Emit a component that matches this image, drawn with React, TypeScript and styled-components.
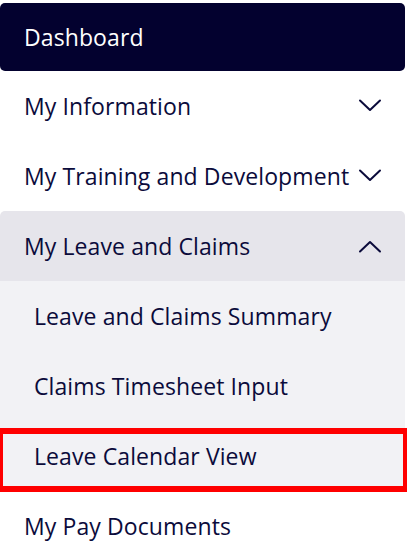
import React from 'react';
import styled, { createGlobalStyle } from 'styled-components';

const GlobalStyle = createGlobalStyle`
  html, body {
    margin: 0;
    padding: 0;
    background: #ffffff;
  }
  body {
    font-family: 'Open Sans', 'Noto Sans', sans-serif;
  }
`;

const Nav = styled.nav`
  width: 405px;
  padding-top: 3px;
  display: flex;
  flex-direction: column;
`;

const Row = styled.div<{ $variant?: 'active' | 'open' | 'sub' | 'plain' }>`
  display: flex;
  align-items: center;
  justify-content: space-between;
  box-sizing: border-box;
  height: ${(p) => (p.$variant === 'active' ? '68px' : '70px')};
  padding: 0 23px 0 ${(p) => (p.$variant === 'sub' ? '34px' : '24px')};
  font-size: 23px;
  letter-spacing: 0.1px;
  color: ${(p) => (p.$variant === 'active' ? '#ffffff' : '#0b0b3b')};
  background: ${(p) =>
    p.$variant === 'active'
      ? '#03012f'
      : p.$variant === 'open'
      ? '#e6e5eb'
      : p.$variant === 'sub'
      ? '#f2f2f5'
      : 'transparent'};
  border-radius: ${(p) =>
    p.$variant === 'active' ? '5px' : p.$variant === 'open' ? '5px 5px 0 0' : '0'};
  cursor: pointer;
  white-space: nowrap;
`;

const Label = styled.span`
  line-height: 1;
`;

const Highlight = styled.div`
  position: relative;
  &::after {
    content: '';
    position: absolute;
    top: 7px;
    left: 0;
    right: -2px;
    bottom: -1px;
    border-style: solid;
    border-color: #ff0000;
    border-width: 6px 4px 6px 3px;
    pointer-events: none;
  }
`;

const Chevron = ({ up }: { up?: boolean }) => (
  <svg width="24" height="14" viewBox="0 0 24 14" fill="none">
    <path
      d={up ? 'M2 12.5 L12 3 L22 12.5' : 'M2 1.5 L12 11 L22 1.5'}
      stroke="#0b0b3b"
      strokeWidth="2"
      strokeLinecap="round"
      strokeLinejoin="round"
    />
  </svg>
);

export default function App() {
  return (
    <>
      <GlobalStyle />
      <Nav>
        <Row $variant="active">
          <Label>Dashboard</Label>
        </Row>
        <Row $variant="plain">
          <Label>My Information</Label>
          <Chevron />
        </Row>
        <Row $variant="plain">
          <Label>My Training and Development</Label>
          <Chevron />
        </Row>
        <Row $variant="open">
          <Label>My Leave and Claims</Label>
          <Chevron up />
        </Row>
        <Row $variant="sub">
          <Label>Leave and Claims Summary</Label>
        </Row>
        <Row $variant="sub">
          <Label>Claims Timesheet Input</Label>
        </Row>
        <Highlight>
          <Row $variant="sub">
            <Label>Leave Calendar View</Label>
          </Row>
        </Highlight>
        <Row $variant="plain">
          <Label>My Pay Documents</Label>
        </Row>
      </Nav>
    </>
  );
}
